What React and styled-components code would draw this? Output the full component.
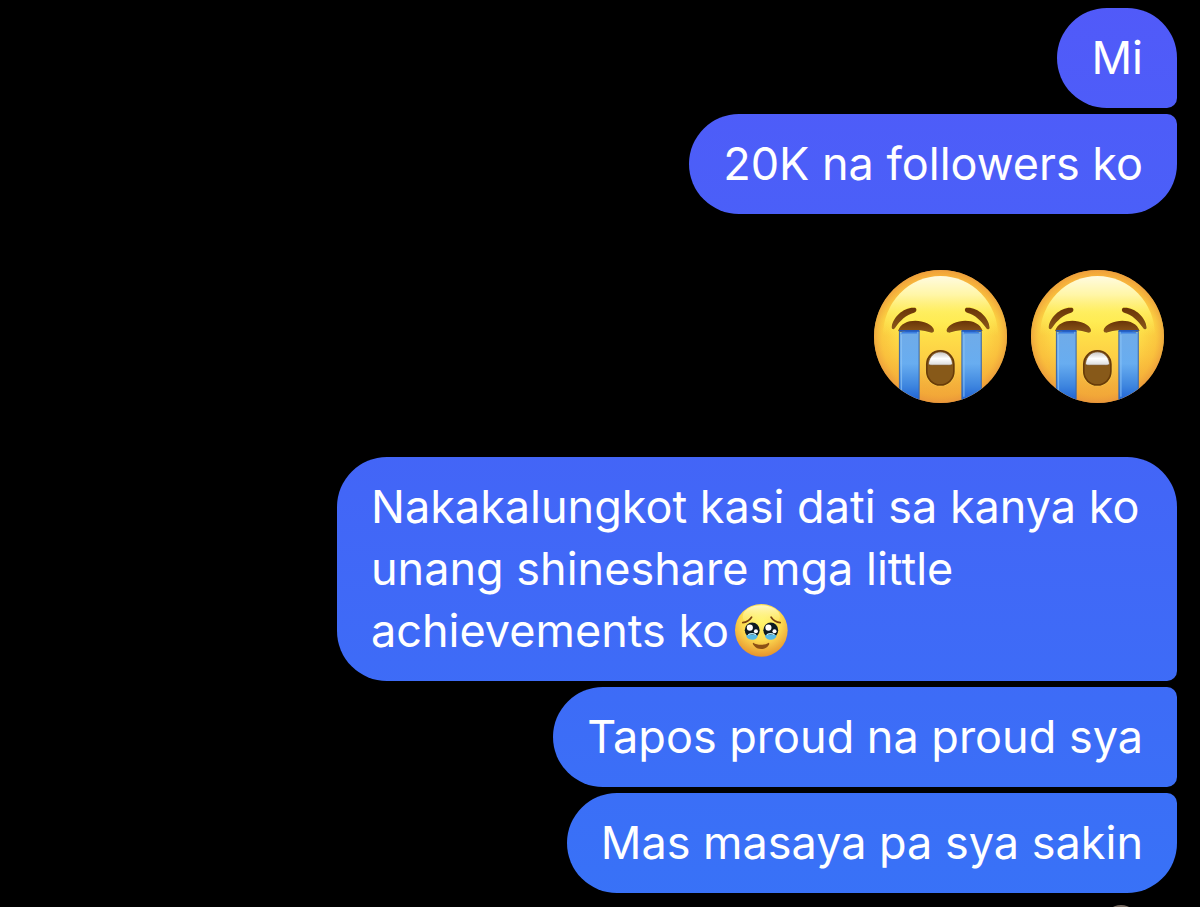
import React, { useId } from "react";
import styled, { createGlobalStyle } from "styled-components";

const GlobalStyle = createGlobalStyle`
  html { background: #000; scrollbar-width: none; }
  body { margin: 0; background: #000; }
`;

const Thread = styled.main`
  display: flex;
  flex-direction: column;
  align-items: flex-end;
  gap: 6px;
  padding: 8px 23px 0;
  color: #fff;
  font-family: Inter, "Liberation Sans", sans-serif;
  font-size: 45px;
  line-height: 62px;
`;

const Bubble = styled.p`
  box-sizing: border-box;
  max-width: min(840px, 100%);
  margin: 0;
  padding: 19px 34px;
  background: linear-gradient(#515af9, #4365f7 50%, #3872f7) fixed;
  border-radius: 50px
    ${({ $joinTop }) => ($joinTop ? "10px" : "50px")}
    ${({ $joinBottom }) => ($joinBottom ? "10px" : "50px")}
    50px;
`;

const EmojiMessage = styled.div`
  display: flex;
  gap: 24px;
  padding: 50px 13px 48px;
`;

const LargeEmoji = styled.svg`
  display: block;
  width: 133px;
  height: 133px;
`;

const InlineEmoji = styled.svg`
  width: 53px;
  height: 53px;
  margin: -8px 0 0 6px;
  vertical-align: middle;
`;

const SeenAvatar = styled.svg`
  width: 34px;
  height: 34px;
  margin: 6px 39px 0;
`;

function SobbingFace() {
  const id = useId();
  const ref = (name) => `url(#${id}${name})`;
  return (
    <LargeEmoji viewBox="30 30 398 398" role="img" aria-label="Loudly crying face">
      <defs>
        <linearGradient id={id + "face"} x1="0" y1="0" x2="0" y2="1">
          <stop offset="0" stopColor="#fbb83e" />
          <stop offset="0.38" stopColor="#ffe94c" />
          <stop offset="0.65" stopColor="#fdd044" />
          <stop offset="1" stopColor="#eea03b" />
        </linearGradient>
        <radialGradient id={id + "edge"} cx="0.5" cy="0.5" r="0.5">
          <stop offset="0.6" stopColor="#f4a72d" stopOpacity="0" />
          <stop offset="0.88" stopColor="#f5a832" stopOpacity="0.4" />
          <stop offset="1" stopColor="#e8923a" stopOpacity="0.7" />
        </radialGradient>
        <linearGradient id={id + "shine"} x1="0" y1="0" x2="0" y2="1">
          <stop offset="0" stopColor="#fffbe0" />
          <stop offset="0.16" stopColor="#fff6a6" />
          <stop offset="0.3" stopColor="#fff266" stopOpacity="0.8" />
          <stop offset="0.5" stopColor="#ffed4f" stopOpacity="0" />
        </linearGradient>
        <linearGradient id={id + "tear"} x1="0" y1="0" x2="0" y2="1">
          <stop offset="0" stopColor="#70abe8" />
          <stop offset="0.45" stopColor="#68adf0" />
          <stop offset="0.75" stopColor="#3e86df" />
          <stop offset="0.95" stopColor="#1f62d4" />
        </linearGradient>
        <linearGradient id={id + "lid"} x1="0" y1="0" x2="0" y2="1">
          <stop offset="0" stopColor="#693407" />
          <stop offset="1" stopColor="#8a571a" />
        </linearGradient>
        <linearGradient id={id + "teeth"} x1="0" y1="0" x2="0" y2="1">
          <stop offset="0" stopColor="#c8c4c1" />
          <stop offset="0.5" stopColor="#ffffff" />
          <stop offset="1" stopColor="#d9dada" />
        </linearGradient>
        <clipPath id={id + "round"}><circle cx="229" cy="229" r="199" /></clipPath>
      </defs>
      <circle cx="229" cy="229" r="199" fill={ref("face")} />
      <circle cx="229" cy="229" r="199" fill={ref("edge")} />
      <ellipse cx="229" cy="226" rx="172" ry="178" fill={ref("shine")} />
      <g clipPath={ref("round")}>
        <path d="M106 211h59v220h-59z M293 211h58v220h-58z" fill={ref("tear")} stroke="#3865a9" strokeWidth="3" />
        <path d="M112 216h47M299 216h46" fill="none" stroke="#3b7ee0" strokeWidth="8" />
        <path d="M112 224v170M299 224v185" fill="none" stroke="#8cc3f5" strokeWidth="4" opacity="0.7" />
      </g>
      <g fill={ref("lid")} stroke="#fff04f" strokeWidth="3" paintOrder="stroke">
        <path d="M102 212 C112 180 158 175 189 189 C204 196 212 207 209 214 C206 219 199 218 191 215 C179 210 154 209 132 210 C117 211 107 219 102 212Z" />
        <path d="M355 212 C345 180 299 175 268 189 C253 196 245 207 248 214 C251 219 258 218 266 215 C278 210 303 209 325 210 C340 211 350 219 355 212Z" />
        <path d="M83 203 C84 170 122 139 153 143 C159 146 158 155 150 158 C126 164 108 182 94 202 C90 209 84 209 83 203Z" />
        <path d="M376 203 C375 170 337 139 306 143 C300 146 301 155 309 158 C333 164 350 182 365 203 C369 209 375 209 376 203Z" />
      </g>
      <path d="M105 212h61M292 212h60" stroke="#2259bc" strokeWidth="5" />
      <rect x="184" y="268" width="89" height="110" rx="44" fill="#f7ce51" />
      <rect x="188" y="272" width="81" height="102" rx="40" fill="#875919" stroke="#693b08" strokeWidth="5" />
      <path d="M193 309c4-21 17-34 36-34s32 13 36 34c0 6-6 6-12 6h-48c-7 0-12 0-12-6z" fill={ref("teeth")} stroke="#6b3d08" strokeWidth="2" />
    </LargeEmoji>
  );
}

function TearfulFace() {
  const id = useId();
  return (
    <InlineEmoji viewBox="32 27 157 157" role="img" aria-label="Face holding back tears">
      <defs>
        <radialGradient id={id + "skin"} cx="0.5" cy="0.32" r="0.68">
          <stop offset="0" stopColor="#fff568" />
          <stop offset="0.55" stopColor="#fddb50" />
          <stop offset="1" stopColor="#e6932e" />
        </radialGradient>
        <linearGradient id={id + "shine"} x1="0" y1="0" x2="0" y2="1">
          <stop offset="0" stopColor="#fff9c8" />
          <stop offset="1" stopColor="#fff568" stopOpacity="0" />
        </linearGradient>
      </defs>
      <circle cx="110" cy="105" r="78" fill={`url(#${id}skin)`} />
      <ellipse cx="110" cy="64" rx="55" ry="33" fill={`url(#${id}shine)`} />
      <g fill="none" stroke="#7a420f" strokeWidth="5" strokeLinecap="round">
        <path d="M55 82c11-1 20-7 26-16M166 82c-11-1-21-7-27-16" />
      </g>
      <path d="M86 142c12 8 35 8 46 0 3 2 1 5-1 8-9 14-34 14-43 0-2-3-5-6-2-8z" fill="#8c5015" />
      <ellipse cx="83" cy="105" rx="22" ry="23" fill="#0d1a22" />
      <ellipse cx="138" cy="105" rx="22" ry="23" fill="#0d1a22" />
      <path d="M65 120c8-4 24-4 34 0 0 17-31 17-34 0zM121 120c9-4 26-4 34 0-2 17-33 17-34 0z" fill="#56b9e6" />
      <path d="M71 118c7-4 16-4 23 0M126 118c7-4 16-4 23 0" fill="none" stroke="#c5f0fb" strokeWidth="4" />
      <g fill="#fff">
        <circle cx="76" cy="97" r="9" />
        <circle cx="131" cy="97" r="9" />
        <circle cx="94" cy="108" r="6" />
        <circle cx="149" cy="108" r="6" />
      </g>
    </InlineEmoji>
  );
}

export default function App() {
  return (
    <>
      <GlobalStyle />
      <Thread>
        <Bubble $joinBottom>Mi</Bubble>
        <Bubble $joinTop>20K na followers ko</Bubble>
        <EmojiMessage>
          <SobbingFace />
          <SobbingFace />
        </EmojiMessage>
        <Bubble $joinBottom>
          Nakakalungkot kasi dati sa kanya ko unang shineshare mga little
          achievements ko<TearfulFace />
        </Bubble>
        <Bubble $joinTop $joinBottom>Tapos proud na proud sya</Bubble>
        <Bubble $joinTop>Mas masaya pa sya sakin</Bubble>
        <SeenAvatar viewBox="0 0 34 34" role="img" aria-label="Seen">
          <circle cx="17" cy="17" r="17" fill="#75685f" />
          <circle cx="17" cy="18" r="13" fill="#2c2929" />
        </SeenAvatar>
      </Thread>
    </>
  );
}
